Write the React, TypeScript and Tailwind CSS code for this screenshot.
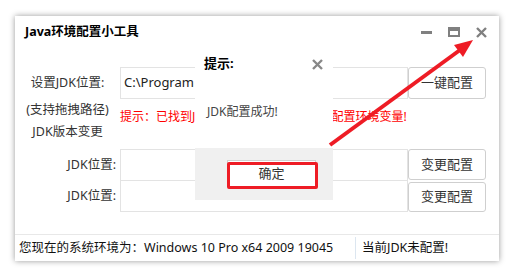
const font = { fontFamily: '"Noto Sans", "Noto Sans CJK SC", sans-serif' };

function WinControls() {
  return (
    <div className="flex items-center gap-[16px] pr-[12px]">
      <svg width="11" height="12" viewBox="0 0 11 12">
        <rect x="0" y="5" width="11" height="3" fill="#808080" />
      </svg>
      <svg width="12" height="10" viewBox="0 0 12 10">
        <rect x="1" y="1" width="10" height="8" fill="none" stroke="#808080" strokeWidth="2" />
        <rect x="1" y="1" width="10" height="3" fill="#808080" />
      </svg>
      <svg width="11" height="11" viewBox="0 0 11 11">
        <path d="M1 1 L10 10 M10 1 L1 10" stroke="#808080" strokeWidth="2.4" />
      </svg>
    </div>
  );
}

export default function App() {
  return (
    <div className="relative w-[519px] h-[274px] bg-white overflow-hidden text-[12px] text-[#333]" style={font}>
      <div className="pt-[16px] pl-[15px]">
        <div className="w-[484px] h-[245px] bg-white flex flex-col shadow-[0_0_6px_rgba(0,0,0,0.4)]">
          {/* title bar */}
          <div className="h-[32px] flex items-center justify-between">
            <div className="pl-[10px] font-bold text-[12.5px] text-black leading-none">Java环境配置小工具</div>
            <WinControls />
          </div>

          {/* row 1 */}
          <div className="mt-[19px] h-[32px] flex">
            <div className="w-[105px] flex items-center justify-center text-[12.5px]">设置JDK位置:</div>
            <div className="w-[288px] border border-[#e3e3e3] flex items-center pl-[3px] text-[13px] text-[#222]">C:\Program</div>
            <button className="w-[78px] border border-[#cfcfcf] rounded-[3px] bg-white text-[13px] text-[#333]">一键配置</button>
          </div>

          {/* row 2 */}
          <div className="h-[44px] flex">
            <div className="w-[105px] flex flex-col items-center text-[12.5px]">
              <div className="h-[22px] flex items-center">(支持拖拽路径)</div>
              <div className="h-[22px] flex items-center">JDK版本变更</div>
            </div>
            <div className="pt-[7px] h-[22px] leading-[22px] text-[12px] text-[#ff0000] whitespace-nowrap">
              提示：已找到JDK安装路径，请点击一键配置环境变量!
            </div>
          </div>

          {/* rows 4, 5 */}
          <div className="mt-[6px] flex flex-col">
            <div className="h-[32px] flex">
              <div className="w-[105px] pr-[4px] flex items-center justify-end text-[12.5px]">JDK位置:</div>
              <div className="w-[288px] border border-[#e3e3e3]" />
              <button className="w-[78px] h-[31px] border border-[#cfcfcf] rounded-[3px] bg-white text-[13px] text-[#333]">变更配置</button>
            </div>
            <div className="h-[32px] -mt-px flex">
              <div className="w-[105px] pr-[4px] flex items-center justify-end text-[12.5px]">JDK位置:</div>
              <div className="w-[288px] border border-[#e3e3e3]" />
              <button className="w-[78px] h-[30px] mt-[2px] border border-[#cfcfcf] rounded-[3px] bg-white text-[13px] text-[#333]">变更配置</button>
            </div>
          </div>

          {/* status bar */}
          <div className="mt-auto h-[27px] border-t border-[#e8e8e8] flex items-center text-[#111] text-[12.5px]">
            <div className="w-[340px] pl-[4px]">您现在的系统环境为：Windows 10 Pro x64 2009 19045</div>
            <div className="h-[22px] border-l border-[#dce6f0]" />
            <div className="pl-[6px]">当前JDK未配置!</div>
          </div>
        </div>
      </div>

      {/* dialog */}
      <div className="absolute left-[195px] top-[48px] w-[138px] h-[152px] bg-white flex flex-col">
        <div className="h-[32px] flex items-center justify-between pl-[9px] pr-[10px]">
          <span className="font-bold text-[13px] text-black">提示:</span>
          <svg width="11" height="11" viewBox="0 0 11 11">
            <path d="M1 1 L10 10 M10 1 L1 10" stroke="#888" strokeWidth="2.4" />
          </svg>
        </div>
        <div className="pl-[12px] pt-[23px] h-[68px] text-[#444]">JDK配置成功!</div>
        <div className="mt-auto h-[52px] bg-[#f0f0f0] flex items-start pl-[32px] pt-[12px]">
          <div className="relative">
            <button className="block w-[89px] h-[27px] border border-[#d0d0d0] bg-white text-[13px] text-[#333]">确定</button>
            <div className="absolute left-0 top-[2px] w-[91px] h-[27px] border-[3px] border-[#ee1c25] rounded-[2px]" />
          </div>
        </div>
      </div>

      {/* red arrow */}
      <svg className="absolute left-0 top-0" width="519" height="274" viewBox="0 0 519 274">
        <line x1="330" y1="145" x2="460" y2="50" stroke="#ee1c25" strokeWidth="4" />
        <polygon points="473,40 463,57 454,45" fill="#ee1c25" />
      </svg>
    </div>
  );
}
